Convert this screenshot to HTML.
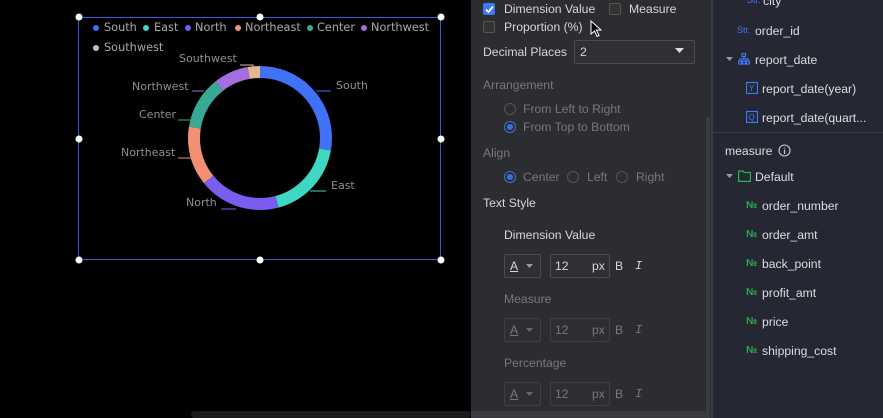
<!DOCTYPE html>
<html><head><meta charset="utf-8"><style>
*{margin:0;padding:0;box-sizing:border-box}
body{width:883px;height:418px;background:#000;position:relative;overflow:hidden;font-family:"Liberation Sans",sans-serif}
.a{position:absolute;white-space:nowrap}
.mid{position:absolute;left:471px;top:0;width:240px;height:418px;background:#2c2d31;color:#d6d6d8;font-size:12.2px}
.right{position:absolute;left:711px;top:0;width:172px;height:418px;background:#252832;color:#dcdde0;font-size:12.2px}
.cb{position:absolute;width:12px;height:12px;border:1px solid #555;background:#333;border-radius:2px}
.dim{color:#77787c}
.radio{position:absolute;width:12px;height:12px;border:1px solid #555;border-radius:50%}
.radio.on{border-color:#3d6ee0}
.radio.on::after{content:"";position:absolute;left:2px;top:2px;width:6px;height:6px;border-radius:50%;background:#3d6ee0}
.box{position:absolute;border:1px solid #4a4b50;background:#2f3034;border-radius:2px}
.lg{font-family:"DejaVu Sans",sans-serif;font-size:11.3px;color:#a9a9a9}
.lab{font-family:"DejaVu Sans",sans-serif;font-size:11px;color:#8f8f8f}
.num{color:#2cb04f;font-size:10px;font-weight:bold}
.str{color:#3d79f2;font-size:9px}
</style></head><body>
<div class="a" style="left:78px;top:17px;width:363px;height:243px;border:1px solid #2f5fd0"></div>
<svg class="a" style="left:0;top:0" width="470" height="418">
<g fill="#fff">
<circle cx="79" cy="17" r="3.5"/><circle cx="260" cy="17" r="3.5"/><circle cx="441" cy="17" r="3.5"/>
<circle cx="79" cy="139" r="3.5"/><circle cx="441" cy="139" r="3.5"/>
<circle cx="79" cy="260" r="3.5"/><circle cx="260" cy="260" r="3.5"/><circle cx="441" cy="260" r="3.5"/>
</g>
<g transform="rotate(-90 260 138)" fill="none" stroke-width="12">
<circle cx="260" cy="138" r="66" stroke="#3f72f5" stroke-dasharray="115.2 500"/>
<circle cx="260" cy="138" r="66" stroke="#3fd6c2" stroke-dasharray="0 115.2 74.9 500"/>
<circle cx="260" cy="138" r="66" stroke="#7a5cef" stroke-dasharray="0 190.1 76 500"/>
<circle cx="260" cy="138" r="66" stroke="#f39073" stroke-dasharray="0 266.1 55.3 500"/>
<circle cx="260" cy="138" r="66" stroke="#37a994" stroke-dasharray="0 321.4 49.4 500"/>
<circle cx="260" cy="138" r="66" stroke="#a46ee0" stroke-dasharray="0 370.8 32.4 500"/>
<circle cx="260" cy="138" r="66" stroke="#e2b892" stroke-dasharray="0 403.2 11.5 500"/>
</g>
<g fill="none" stroke-width="1">
<path d="M316 91 L331 91" stroke="#3f72f5"/>
<path d="M310 191 L326 191" stroke="#3fd6c2"/>
<path d="M221 209 L236 209" stroke="#7a5cef"/>
<path d="M178 158 L192 158" stroke="#f39073"/>
<path d="M178 120 L190 120" stroke="#37a994"/>
<path d="M192 91 L204 91" stroke="#a46ee0"/>
<path d="M240 65 L253 65 L253 70" stroke="#e2b892"/>
</g>
<g>
<circle cx="96" cy="28" r="3" fill="#3f72f5"/><circle cx="146" cy="28" r="3" fill="#3fd6c2"/>
<circle cx="188" cy="28" r="3" fill="#7a5cef"/><circle cx="238" cy="28" r="3" fill="#f39073"/>
<circle cx="310" cy="28" r="3" fill="#37a994"/><circle cx="364" cy="28" r="3" fill="#a46ee0"/>
<circle cx="96" cy="48" r="3" fill="#e2b892"/>
</g>
</svg>
<div class="a lg" style="left:104px;top:21px">South</div>
<div class="a lg" style="left:154px;top:21px">East</div>
<div class="a lg" style="left:195px;top:21px">North</div>
<div class="a lg" style="left:245px;top:21px">Northeast</div>
<div class="a lg" style="left:317px;top:21px">Center</div>
<div class="a lg" style="left:371px;top:21px">Northwest</div>
<div class="a lg" style="left:104px;top:41px">Southwest</div>
<div class="a lab" style="left:336px;top:79px">South</div>
<div class="a lab" style="left:331px;top:179px">East</div>
<div class="a lab" style="left:186px;top:196px">North</div>
<div class="a lab" style="left:121px;top:146px">Northeast</div>
<div class="a lab" style="left:139px;top:108px">Center</div>
<div class="a lab" style="left:132px;top:80px">Northwest</div>
<div class="a lab" style="left:179px;top:52px">Southwest</div>
<div class="a" style="left:191px;top:411px;width:280px;height:7px;background:#1b1b1c;border-radius:3px"></div>

<div class="mid">
<div class="cb" style="left:12px;top:3px;background:#3d79f2;border-color:#3d79f2"></div>
<svg class="a" style="left:14px;top:5px" width="9" height="9"><path d="M1 4.5 L3.5 7 L8 1.5" stroke="#fff" stroke-width="1.8" fill="none"/></svg>
<div class="a" style="left:33px;top:2px">Dimension Value</div>
<div class="cb" style="left:138px;top:3px"></div>
<div class="a" style="left:158px;top:2px">Measure</div>
<div class="cb" style="left:12px;top:21px"></div>
<div class="a" style="left:33px;top:20px">Proportion (%)</div>
<svg class="a" style="left:119px;top:20px" width="14" height="18"><path d="M1 1 L1 14 L4.5 11 L7 16.5 L9 15.5 L6.5 10 L11 10 Z" fill="#000" stroke="#fff" stroke-width="1"/></svg>
<div class="a" style="left:12px;top:45px">Decimal Places</div>
<div class="box" style="left:103px;top:40px;width:121px;height:24px"></div>
<div class="a" style="left:109px;top:45px">2</div>
<svg class="a" style="left:204px;top:48px" width="10" height="6"><path d="M0 0 L9 0 L4.5 5Z" fill="#ddd"/></svg>
<div class="a dim" style="left:12px;top:78px">Arrangement</div>
<div class="radio" style="left:33px;top:103px"></div>
<div class="a dim" style="left:52px;top:102px">From Left to Right</div>
<div class="radio on" style="left:33px;top:121px"></div>
<div class="a dim" style="left:52px;top:120px">From Top to Bottom</div>
<div class="a dim" style="left:12px;top:146px">Align</div>
<div class="radio on" style="left:33px;top:171px"></div>
<div class="a dim" style="left:52px;top:170px">Center</div>
<div class="radio" style="left:96px;top:171px"></div>
<div class="a dim" style="left:116px;top:170px">Left</div>
<div class="radio" style="left:145px;top:171px"></div>
<div class="a dim" style="left:165px;top:170px">Right</div>
<div class="a" style="left:12px;top:196px">Text Style</div>
<div class="a" style="left:33px;top:228px">Dimension Value</div>
<div class="box" style="left:33px;top:254px;width:37px;height:24px"></div>
<div class="a" style="left:39px;top:259px;text-decoration:underline">A</div>
<svg class="a" style="left:55px;top:264px" width="8" height="5"><path d="M0 0 L7 0 L3.5 4Z" fill="#999"/></svg>
<div class="box" style="left:79px;top:254px;width:60px;height:24px"></div>
<div class="a" style="left:84px;top:259px">12</div><div class="a" style="left:121px;top:259px">px</div>
<div class="a" style="left:144px;top:259px">B</div><div class="a" style="left:164px;top:259px;font-style:italic;font-family:'Liberation Mono',monospace">I</div>
<div class="a dim" style="left:33px;top:292px">Measure</div>
<div class="box" style="left:33px;top:318px;width:37px;height:24px;opacity:.6"></div>
<div class="a dim" style="left:39px;top:323px;text-decoration:underline">A</div>
<svg class="a" style="left:55px;top:328px" width="8" height="5"><path d="M0 0 L7 0 L3.5 4Z" fill="#666"/></svg>
<div class="box" style="left:79px;top:318px;width:60px;height:24px;opacity:.6"></div>
<div class="a dim" style="left:84px;top:323px">12</div><div class="a dim" style="left:121px;top:323px">px</div>
<div class="a dim" style="left:144px;top:323px">B</div><div class="a dim" style="left:164px;top:323px;font-style:italic;font-family:'Liberation Mono',monospace">I</div>
<div class="a dim" style="left:33px;top:356px">Percentage</div>
<div class="box" style="left:33px;top:382px;width:37px;height:24px;opacity:.6"></div>
<div class="a dim" style="left:39px;top:387px;text-decoration:underline">A</div>
<svg class="a" style="left:55px;top:392px" width="8" height="5"><path d="M0 0 L7 0 L3.5 4Z" fill="#666"/></svg>
<div class="box" style="left:79px;top:382px;width:60px;height:24px;opacity:.6"></div>
<div class="a dim" style="left:84px;top:387px">12</div><div class="a dim" style="left:121px;top:387px">px</div>
<div class="a dim" style="left:144px;top:387px">B</div><div class="a dim" style="left:164px;top:387px;font-style:italic;font-family:'Liberation Mono',monospace">I</div>
<div class="a" style="left:0;top:411px;width:235px;height:7px;background:#3a3b40"></div>
<div class="a" style="left:235px;top:117px;width:4px;height:301px;background:#3a3b40"></div>
</div>

<div class="right">
<div class="a" style="left:0;top:0;width:2px;height:418px;background:#3a3c44"></div>
<div class="a str" style="left:36px;top:-5px">Str.</div>
<div class="a" style="left:52px;top:-6px">city</div>
<div class="a str" style="left:26px;top:25px">Str.</div>
<div class="a" style="left:44px;top:24px">order_id</div>
<svg class="a" style="left:15px;top:57px" width="8" height="5"><path d="M0 0 L7 0 L3.5 4Z" fill="#999"/></svg>
<svg class="a" style="left:27px;top:53px" width="12" height="12" fill="none" stroke="#3d79f2" stroke-width="1.2"><rect x="4" y="0.5" width="3.5" height="3"/><rect x="0.5" y="8" width="3" height="3"/><rect x="4.5" y="8" width="3" height="3"/><rect x="8.5" y="8" width="3" height="3"/><path d="M6 4 V6 M2 8 V6 H10 V8"/></svg>
<div class="a" style="left:44px;top:53px">report_date</div>
<svg class="a" style="left:35px;top:81px" width="12" height="13" fill="none" stroke="#3d79f2" stroke-width="1.2"><rect x="0.5" y="1.5" width="11" height="11"/><text x="3" y="10" font-size="8" fill="#3d79f2" stroke="none" font-family="Liberation Sans">Y</text></svg>
<div class="a" style="left:51px;top:82px">report_date(year)</div>
<svg class="a" style="left:35px;top:110px" width="12" height="13" fill="none" stroke="#3d79f2" stroke-width="1.2"><rect x="0.5" y="1.5" width="11" height="11"/><text x="2.5" y="10" font-size="8" fill="#3d79f2" stroke="none" font-family="Liberation Sans">Q</text></svg>
<div class="a" style="left:51px;top:111px">report_date(quart...</div>
<div class="a" style="left:0;top:132px;width:172px;height:1px;background:#3a3c44"></div>
<div class="a" style="left:14px;top:144px">measure</div>
<svg class="a" style="left:67px;top:144px" width="13" height="13"><circle cx="6.5" cy="6.5" r="5.5" fill="none" stroke="#ccc" stroke-width="1.1"/><path d="M6.5 5.5 V10 M6.5 3.5 V4.3" stroke="#ccc" stroke-width="1.2"/></svg>
<svg class="a" style="left:15px;top:174px" width="8" height="5"><path d="M0 0 L7 0 L3.5 4Z" fill="#999"/></svg>
<svg class="a" style="left:27px;top:170px" width="13" height="12"><path d="M0.6 1 H5 L6 2.5 H12.4 V11.4 H0.6 Z" fill="none" stroke="#2cb04f" stroke-width="1.2"/></svg>
<div class="a" style="left:44px;top:170px">Default</div>
<div class="a num" style="left:35px;top:200px">№</div><div class="a" style="left:51px;top:199px">order_number</div>
<div class="a num" style="left:35px;top:229px">№</div><div class="a" style="left:51px;top:228px">order_amt</div>
<div class="a num" style="left:35px;top:258px">№</div><div class="a" style="left:51px;top:257px">back_point</div>
<div class="a num" style="left:35px;top:287px">№</div><div class="a" style="left:51px;top:286px">profit_amt</div>
<div class="a num" style="left:35px;top:316px">№</div><div class="a" style="left:51px;top:315px">price</div>
<div class="a num" style="left:35px;top:345px">№</div><div class="a" style="left:51px;top:344px">shipping_cost</div>
</div>
</body></html>
